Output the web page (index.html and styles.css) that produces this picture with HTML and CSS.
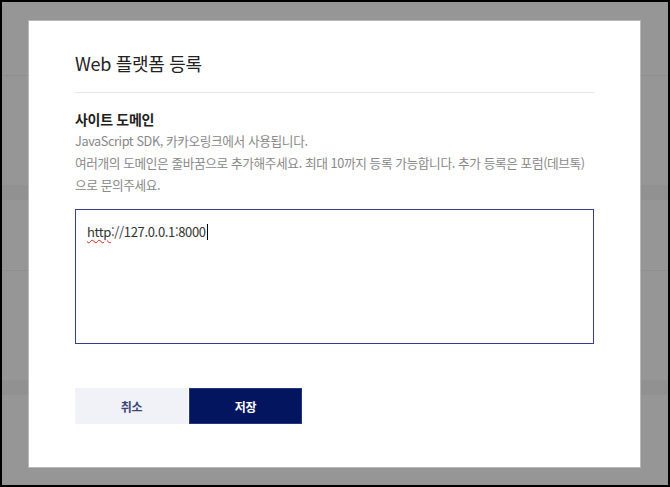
FILE: index.html
```html
<!DOCTYPE html>
<html lang="ko">
<head>
<meta charset="utf-8">
<title>Web 플랫폼 등록</title>
<link rel="stylesheet" href="styles.css">
</head>
<body>
<div class="screen">
  <div class="modal">
    <h1 class="modal-title">Web 플랫폼 등록</h1>
    <section class="field">
      <h2 class="field-label">사이트 도메인</h2>
      <p class="field-desc">JavaScript SDK, 카카오링크에서 사용됩니다.<br>여러개의 도메인은 줄바꿈으로 추가해주세요. 최대 10까지 등록 가능합니다. 추가 등록은 포럼(데브톡)으로 문의주세요.</p>
      <div class="textbox"><span class="typo">http</span>://127.0.0.1:8000<span class="caret"></span></div>
    </section>
    <div class="actions">
      <button class="btn btn-cancel" type="button">취소</button>
      <button class="btn btn-save" type="button">저장</button>
    </div>
  </div>
</div>
</body>
</html>
```

FILE: styles.css
```css
* { box-sizing: border-box; }
html, body { margin: 0; padding: 0; }
body {
  font-family: "Noto Sans CJK KR", "Noto Sans", sans-serif;
  background: #000;
}
.screen {
  width: 670px;
  height: 487px;
  border: 2px solid #000;
  padding: 19px 0 0 27px;
  background:
    linear-gradient(to bottom,
      transparent 0, transparent 73px,
      #8e8e8e 73px, #8e8e8e 74px,
      transparent 74px, transparent 183px,
      #919191 183px, #919191 198px,
      transparent 198px, transparent 268px,
      #8e8e8e 268px, #8e8e8e 269px,
      transparent 269px, transparent 378px,
      #919191 378px, #919191 393px,
      transparent 393px) ,
    #969696;
}
.modal {
  width: 611px;
  height: 446px;
  background: #fff;
  box-shadow: 0 0 0 1px #b8b8b8;
  padding: 28px 46px 0;
}
.modal-title {
  margin: 0;
  font-size: 18px;
  font-weight: 400;
  line-height: 28px;
  color: #222;
  letter-spacing: -0.3px;
  padding-bottom: 15px;
  border-bottom: 1px solid #e4e4e4;
}
.field { padding-top: 15px; }
.field-label {
  margin: 0;
  font-size: 14px;
  font-weight: 700;
  line-height: 22px;
  color: #1e1e1e;
  letter-spacing: -0.3px;
}
.field-desc {
  margin: 0;
  font-size: 12.7px;
  line-height: 22px;
  color: #888;
  letter-spacing: -0.4px;
}
.textbox {
  margin-top: 13px;
  height: 135px;
  border: 1px solid #34408c;
  padding: 12px 11px;
  font-size: 13px;
  line-height: 20px;
  color: #333;
  letter-spacing: -0.35px;
}
.typo {
  text-decoration: underline wavy #e02020;
  text-decoration-thickness: 1px;
  text-underline-offset: 2px;
}
.caret {
  display: inline-block;
  width: 1px;
  height: 16px;
  background: #000;
  vertical-align: -3px;
  margin-left: 1px;
}
.actions {
  display: flex;
  gap: 1px;
  margin-top: 44px;
}
.btn {
  width: 113px;
  height: 36px;
  border: 0;
  font-family: inherit;
  font-size: 12px;
  font-weight: 700;
  letter-spacing: -0.3px;
  padding: 0;
}
.btn-cancel {
  background: #f1f2f8;
  color: #3a4679;
}
.btn-save {
  background: #03155f;
  color: #fff;
  border: 1px solid #24367c;
}
```
